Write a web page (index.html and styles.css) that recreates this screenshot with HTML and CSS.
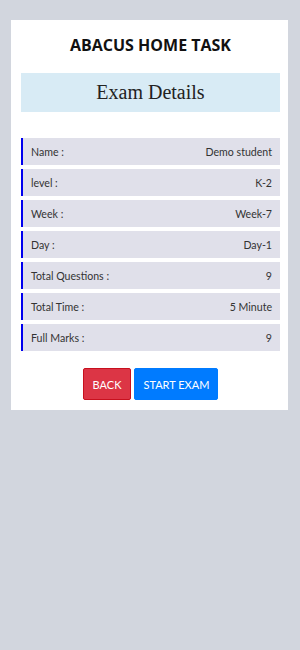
FILE: index.html
```html
<!DOCTYPE html>
<html>
<head>
<meta charset="utf-8">
<link rel="stylesheet" href="styles.css">
</head>
<body>
<div class="card">
  <h1 class="title">ABACUS HOME TASK</h1>
  <div class="banner">Exam Details</div>
  <div class="rows">
    <div class="row"><span>Name :</span><span>Demo student</span></div>
    <div class="row"><span>level :</span><span>K-2</span></div>
    <div class="row"><span>Week :</span><span>Week-7</span></div>
    <div class="row"><span>Day :</span><span>Day-1</span></div>
    <div class="row"><span>Total Questions :</span><span>9</span></div>
    <div class="row"><span>Total Time :</span><span>5 Minute</span></div>
    <div class="row"><span>Full Marks :</span><span>9</span></div>
  </div>
  <div class="actions">
    <button class="btn btn-back">BACK</button>
    <button class="btn btn-start">START EXAM</button>
  </div>
</div>
</body>
</html>
```
FILE: styles.css
```css
html, body {
  margin: 0;
  padding: 0;
  background: #d2d6de;
  height: 100%;
}
body {
  padding: 20px 12px 0 11px;
  box-sizing: border-box;
  font-family: "Open Sans", "Liberation Sans", sans-serif;
}
.card {
  background: #fff;
  padding: 14px 8px 10px 10px;
  height: 390px;
  box-sizing: border-box;
}
.title {
  margin: 0;
  text-align: center;
  font-size: 16px;
  font-weight: 700;
  color: #111;
  line-height: 22px;
}
.banner {
  margin-top: 17px;
  background: #d8ebf5;
  height: 39px;
  display: flex;
  align-items: center;
  justify-content: center;
  font-family: "Liberation Serif", "DejaVu Serif", serif;
  font-size: 20px;
  color: #222;
}
.rows {
  margin-top: 26px;
  display: flex;
  flex-direction: column;
  gap: 4px;
}
.row {
  height: 27px;
  background: #e0e0ea;
  border-left: 2px solid #0000ee;
  display: flex;
  justify-content: space-between;
  align-items: center;
  padding: 0 8px 0 8px;
  font-family: Lato, "Open Sans", sans-serif;
  font-size: 10.6px;
  color: #333;
}
.actions {
  margin-top: 17px;
  display: flex;
  justify-content: center;
  gap: 3px;
}
.btn {
  height: 32px;
  border-radius: 2px;
  font-family: Lato, "Open Sans", sans-serif;
  font-size: 11px;
  color: #fff;
  padding: 0 8px;
  border: 1px solid;
}
.btn-back {
  background: #dc3545;
  border-color: #c8101e;
  padding: 0 9px;
}
.btn-start {
  background: #007bff;
  border-color: #007bff;
}
```
